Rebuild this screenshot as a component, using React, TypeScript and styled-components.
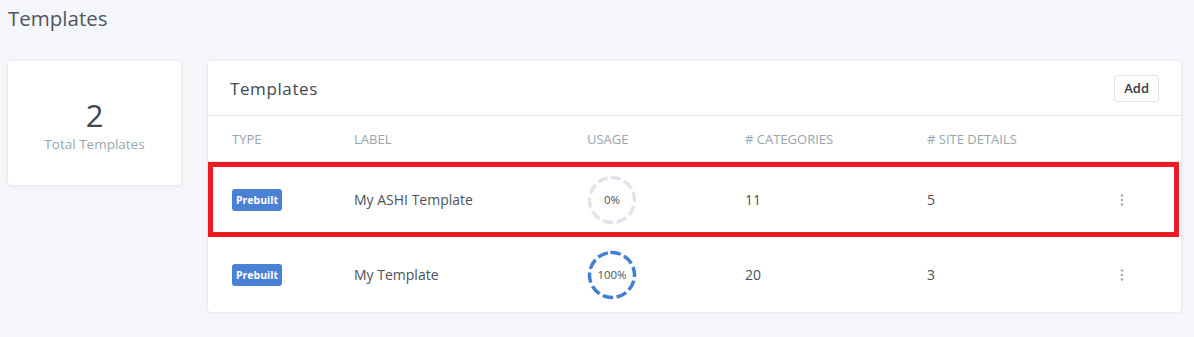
import React from "react";
import styled, { createGlobalStyle } from "styled-components";

const GlobalStyle = createGlobalStyle`
  body {
    margin: 0;
    background: #f5f6fa;
    font-family: "Open Sans", "Noto Sans", Arial, sans-serif;
    color: #495057;
  }
`;

const Page = styled.div`
  padding: 5px 12px 0 7px;
`;

const PageTitle = styled.h4`
  margin: 0 0 0 1px;
  font-size: 20.5px;
  line-height: 26px;
  font-weight: 400;
  color: #4f5661;
`;

const Layout = styled.div`
  display: grid;
  grid-template-columns: 175px 975px;
  gap: 25px;
  margin-top: 29px;
  align-items: start;
`;

const Card = styled.div`
  background: #fff;
  border: 1px solid #e9ecf1;
  border-radius: 4px;
  box-shadow: 0 1px 3px rgba(60, 70, 90, 0.06);
`;

const StatCard = styled(Card)`
  height: 126px;
  box-sizing: border-box;
  display: flex;
  flex-direction: column;
  align-items: center;
  justify-content: center;
  padding-top: 4px;
`;

const StatValue = styled.div`
  font-size: 31px;
  line-height: 36px;
  color: #3d4651;
`;

const StatLabel = styled.div`
  font-size: 13.5px;
  color: #98a6ad;
  margin-top: 2px;
`;

const CardHeader = styled.div`
  display: flex;
  align-items: center;
  justify-content: space-between;
  height: 54px;
  padding: 0 22px 0 22px;
  border-bottom: 1px solid #e3e6ec;
`;

const CardTitle = styled.h5`
  margin: 0;
  font-size: 17px;
  font-weight: 400;
  letter-spacing: 0.6px;
  color: #3f4753;
`;

const AddButton = styled.button`
  font-family: inherit;
  font-size: 13px;
  font-weight: 600;
  color: #343a40;
  background: #fff;
  border: 1px solid #dfe3e8;
  border-radius: 3px;
  height: 27px;
  padding: 0 9px;
`;

const Row = styled.div<{ $head?: boolean; $highlight?: boolean }>`
  display: grid;
  grid-template-columns: 122px 233px 158px 182px 193px 1fr;
  align-items: center;
  padding-left: 24px;
  box-sizing: border-box;
  height: ${(p) => (p.$head ? "46px" : "75px")};
  border-bottom: ${(p) => (p.$head ? "1px solid #e3e6ec" : "none")};
  font-size: ${(p) => (p.$head ? "13px" : "14px")};
  color: ${(p) => (p.$head ? "#98a6ad" : "#4a525c")};
  text-transform: ${(p) => (p.$head ? "uppercase" : "none")};
  outline: ${(p) => (p.$highlight ? "5px solid #ed1c24" : "none")};
  outline-offset: -5px;
  margin-right: ${(p) => (p.$highlight ? "2px" : "0")};
`;

const HeadCell = styled.div`
  padding-top: 1px;
`;

const Badge = styled.span`
  display: inline-block;
  background: #4a81d4;
  color: #fff;
  font-size: 10.5px;
  font-weight: 700;
  line-height: 22px;
  padding: 0 4px;
  border-radius: 3px;
`;

const UsageWrap = styled.div`
  position: relative;
  width: 50px;
  height: 50px;
  display: flex;
  align-items: center;
  justify-content: center;
  font-size: 11.5px;
  color: #4a525c;
`;

const Ring = styled.svg`
  position: absolute;
  inset: 0;
`;

const Dots = styled.div`
  color: #a3abb5;
  display: flex;
  align-items: center;
`;

const Usage = ({ value }: { value: number }) => {
  const color = value > 0 ? "#3f7fd4" : "#dfe4ec";
  return (
    <UsageWrap>
      <Ring width="50" height="50" viewBox="0 0 50 50">
        <circle
          cx="25"
          cy="25"
          r="22.5"
          fill="none"
          stroke={color}
          strokeWidth="3.5"
          strokeDasharray="10.5 3.64"
          transform="rotate(-94 25 25)"
        />
      </Ring>
      {value}%
    </UsageWrap>
  );
};

const MoreIcon = () => (
  <svg width="4" height="12" viewBox="0 0 4 12">
    <circle cx="2" cy="1.5" r="1.3" fill="#a3abb5" />
    <circle cx="2" cy="6" r="1.3" fill="#a3abb5" />
    <circle cx="2" cy="10.5" r="1.3" fill="#a3abb5" />
  </svg>
);

const templates = [
  { label: "My ASHI Template", usage: 0, categories: 11, details: 5, highlight: true },
  { label: "My Template", usage: 100, categories: 20, details: 3, highlight: false },
];

export default function App() {
  return (
    <>
      <GlobalStyle />
      <Page>
        <PageTitle>Templates</PageTitle>
        <Layout>
          <StatCard>
            <StatValue>2</StatValue>
            <StatLabel>Total Templates</StatLabel>
          </StatCard>
          <Card>
            <CardHeader>
              <CardTitle>Templates</CardTitle>
              <AddButton>Add</AddButton>
            </CardHeader>
            <Row $head>
              <HeadCell>Type</HeadCell>
              <HeadCell>Label</HeadCell>
              <HeadCell>Usage</HeadCell>
              <HeadCell># Categories</HeadCell>
              <HeadCell># Site Details</HeadCell>
            </Row>
            {templates.map((t) => (
              <Row key={t.label} $highlight={t.highlight}>
                <div>
                  <Badge>Prebuilt</Badge>
                </div>
                <div>{t.label}</div>
                <div>
                  <Usage value={t.usage} />
                </div>
                <div>{t.categories}</div>
                <div>{t.details}</div>
                <Dots>
                  <MoreIcon />
                </Dots>
              </Row>
            ))}
          </Card>
        </Layout>
      </Page>
    </>
  );
}
